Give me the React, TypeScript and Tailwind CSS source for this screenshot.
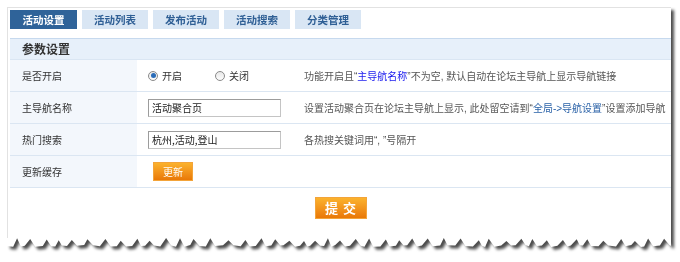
import React from 'react';

const tabs = ['活动设置', '活动列表', '发布活动', '活动搜索', '分类管理'];

function tornEdge(width: number) {
  let seed = 11;
  const rnd = () => {
    seed = (seed * 9301 + 49297) % 233280;
    return seed / 233280;
  };
  const pts: string[] = ['0,0', '0,8'];
  let x = 0;
  while (x < width - 14) {
    x += 3 + rnd() * 5;
    pts.push(`${x.toFixed(1)},${(7 + rnd() * 2).toFixed(1)}`);
    x += 3 + rnd() * 3;
    pts.push(`${x.toFixed(1)},${(rnd() * 3).toFixed(1)}`);
    x += 3 + rnd() * 3;
    pts.push(`${x.toFixed(1)},${(7 + rnd() * 2).toFixed(1)}`);
  }
  pts.push(`${width},8`, `${width},0`);
  return pts.join(' ');
}

function Q({ children }: { children: React.ReactNode }) {
  return <span className="font-['Liberation_Sans',sans-serif]">{children}</span>;
}

function Radio({ checked }: { checked?: boolean }) {
  return (
    <span className="w-[10px] h-[10px] rounded-full border border-[#8a8a8a] bg-linear-to-b from-[#e8e8e8] to-[#fdfdfd] flex items-center justify-center">
      {checked && <span className="w-[5px] h-[5px] rounded-full bg-[#2a6cb8]" />}
    </span>
  );
}

function Row({ label, children, desc }: { label: string; children?: React.ReactNode; desc?: React.ReactNode }) {
  return (
    <div className="flex h-[32px] border-b border-[#dbe6f2]">
      <div className="w-[127px] bg-[#f3f7fc] pl-[12px] flex items-center text-[10px] text-[#333]">{label}</div>
      <div className="w-[167px] pl-[11px] flex items-center">{children}</div>
      <div className="flex-1 flex items-center text-[10px] text-[#555] whitespace-nowrap overflow-hidden">{desc}</div>
    </div>
  );
}

export default function App() {
  const edge = tornEdge(664);
  return (
    <div className="w-[680px] h-[262px] bg-white overflow-hidden pt-[7px] pl-[7px] font-['Noto_Sans_CJK_SC',sans-serif]">
      <div className="w-[664px] drop-shadow-[3px_3px_1.5px_rgba(0,0,0,0.7)]">
        <div className="bg-white border-l border-t border-[#e2e2e2] pl-[2px] pt-[2px] h-[231px]">
          {/* tabs */}
          <div className="flex gap-[5px]">
            {tabs.map((t, i) => (
              <div
                key={t}
                className={
                  i === 0
                    ? 'w-[67px] h-[19px] flex items-center justify-center bg-[#2f6399] text-white text-[10.5px] font-bold'
                    : 'w-[66px] h-[19px] flex items-center justify-center bg-[#d9e6f4] text-[#2f5f95] text-[10.5px] font-bold'
                }
              >
                {t}
              </div>
            ))}
          </div>

          <div className="mt-[9px] h-[22px] border-t border-[#c6d9ee] border-b border-b-[#dae6f3] bg-[#e7f0fa] pl-[12px] flex items-center text-[12px] font-bold text-[#333]">
            参数设置
          </div>

          <Row
            label="是否开启"
            desc={
              <span>
                功能开启且<Q>“</Q><span className="text-[#1a1aee]">主导航名称</span><Q>”</Q>不为空<Q>, </Q>默认自动在论坛主导航上显示导航链接
              </span>
            }
          >
            <div className="flex items-center text-[10px] text-[#333]">
              <Radio checked />
              <span className="ml-[4px]">开启</span>
              <span className="ml-[33px]">
                <Radio />
              </span>
              <span className="ml-[4px]">关闭</span>
            </div>
          </Row>

          <Row
            label="主导航名称"
            desc={
              <span>
                设置活动聚合页在论坛主导航上显示<Q>, </Q>此处留空请到<Q>“</Q><span className="text-[#2c63a8]">全局<Q>-&gt;</Q>导航设置</span><Q>”</Q>设置添加导航
              </span>
            }
          >
            <input
              readOnly
              defaultValue="活动聚合页"
              className="w-[133px] h-[18px] border border-[#c4c4c4] border-t-[#9c9c9c] border-l-[#9c9c9c] px-[3px] text-[10px] text-[#222] outline-none"
            />
          </Row>

          <Row
            label="热门搜索"
            desc={
              <span>
                各热搜关键词用<Q>“, ”</Q>号隔开
              </span>
            }
          >
            <input
              readOnly
              defaultValue="杭州,活动,登山"
              className="w-[133px] h-[18px] border border-[#c4c4c4] border-t-[#9c9c9c] border-l-[#9c9c9c] px-[3px] text-[10px] text-[#222] outline-none"
            />
          </Row>

          <Row label="更新缓存">
            <button className="ml-[5px] w-[40px] h-[19px] border border-[#f3a43a] bg-linear-to-b from-[#fbb22c] to-[#e97806] text-white text-[10px] flex items-center justify-center">
              更新
            </button>
          </Row>

          <div className="flex justify-center mt-[9px]">
            <button className="w-[52px] h-[22px] border border-[#f3a43a] bg-linear-to-b from-[#fbb22c] to-[#e97806] text-white text-[13px] font-bold tracking-[5px] pl-[5px] flex items-center justify-center">
              提交
            </button>
          </div>
        </div>
        <svg width="664" height="10" className="block">
          <polygon points={edge} fill="#ffffff" />
        </svg>
      </div>
    </div>
  );
}
